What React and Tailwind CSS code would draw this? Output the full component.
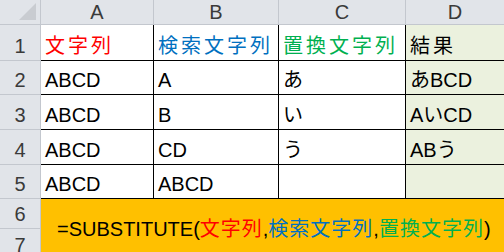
import React from "react";

const font = "font-['Liberation_Sans','Noto_Sans_CJK_JP',sans-serif]";

const cols = ["A", "B", "C", "D"];
const rowNums = [1, 2, 3, 4, 5, 6, 7];

const rows = [
  ["ABCD", "A", "あ", "あBCD"],
  ["ABCD", "B", "い", "AいCD"],
  ["ABCD", "CD", "う", "ABう"],
  ["ABCD", "ABCD", "", ""],
];

const Cell = ({ children, last, green, className = "" }) => (
  <div
    className={`flex items-end pl-[4px] pb-[4px] border-b border-black ${
      last ? "" : "border-r"
    } ${green ? "bg-[#ebf1de]" : "bg-white"} ${className}`}
  >
    <span className="leading-[20px] whitespace-nowrap">{children}</span>
  </div>
);

export default function App() {
  return (
    <div
      className={`${font} text-[20px] text-black w-[504px] h-[252px] overflow-hidden grid grid-cols-[41px_113px_125px_127px_1fr] grid-rows-[25px_36px_34px_35px_35px_34px_30px_30px]`}
    >
      {/* corner */}
      <div className="bg-[#e1e4e9] border-r border-b border-[#c3c7ce] flex items-end justify-end p-[3px]">
        <svg width="20" height="20" viewBox="0 0 20 20">
          <polygon points="19,2 19,19 2,19" fill="#c9ccd1" />
        </svg>
      </div>

      {/* column headers */}
      {cols.map((c, i) => (
        <div
          key={c}
          className={`bg-[#e1e4e9] border-b border-[#c3c7ce] ${
            i < 3 ? "border-r" : ""
          } flex justify-center pt-[2px] text-[#3a3a3a] leading-[20px]`}
        >
          {c}
        </div>
      ))}

      {/* row 1 */}
      <div className="col-start-1 row-start-2 bg-[#e1e4e9] border-r border-b border-[#c3c7ce] flex items-end justify-center pb-[4px] text-[#3a3a3a] leading-[20px]">
        1
      </div>
      <Cell>
        <span className="text-[#ff0000] tracking-[3px]">文字列</span>
      </Cell>
      <Cell>
        <span className="text-[#0070c0] tracking-[3px]">検索文字列</span>
      </Cell>
      <Cell>
        <span className="text-[#00b050] tracking-[3px]">置換文字列</span>
      </Cell>
      <Cell last green>
        <span className="tracking-[3px]">結果</span>
      </Cell>

      {/* rows 2-5 */}
      {rows.map((r, ri) => (
        <React.Fragment key={ri}>
          <div className="col-start-1 bg-[#e1e4e9] border-r border-b border-[#c3c7ce] flex items-end justify-center pb-[4px] text-[#3a3a3a] leading-[20px]">
            {rowNums[ri + 1]}
          </div>
          {r.map((v, ci) => (
            <Cell key={ci} last={ci === 3} green={ci === 3}>
              {v}
            </Cell>
          ))}
        </React.Fragment>
      ))}

      {/* rows 6-7 */}
      <div className="col-start-1 row-start-7 bg-[#e1e4e9] border-r border-b border-[#c3c7ce] flex items-end justify-center pb-[4px] text-[#3a3a3a] leading-[20px]">
        6
      </div>
      <div className="col-start-1 row-start-8 bg-[#e1e4e9] border-r border-[#c3c7ce] flex items-end justify-center pb-[4px] text-[#3a3a3a] leading-[20px]">
        7
      </div>

      <div className="col-start-2 col-span-4 row-start-7 row-span-2 bg-[#ffc000] pl-[16px] pt-[20px] leading-[20px] whitespace-nowrap">
        =SUBSTITUTE(
        <span className="text-[#ff0000] tracking-[1px]">文字列</span>,
        <span className="text-[#0070c0] tracking-[1px]">検索文字列</span>,
        <span className="text-[#00b050] tracking-[1px]">置換文字列</span>)
      </div>
    </div>
  );
}
